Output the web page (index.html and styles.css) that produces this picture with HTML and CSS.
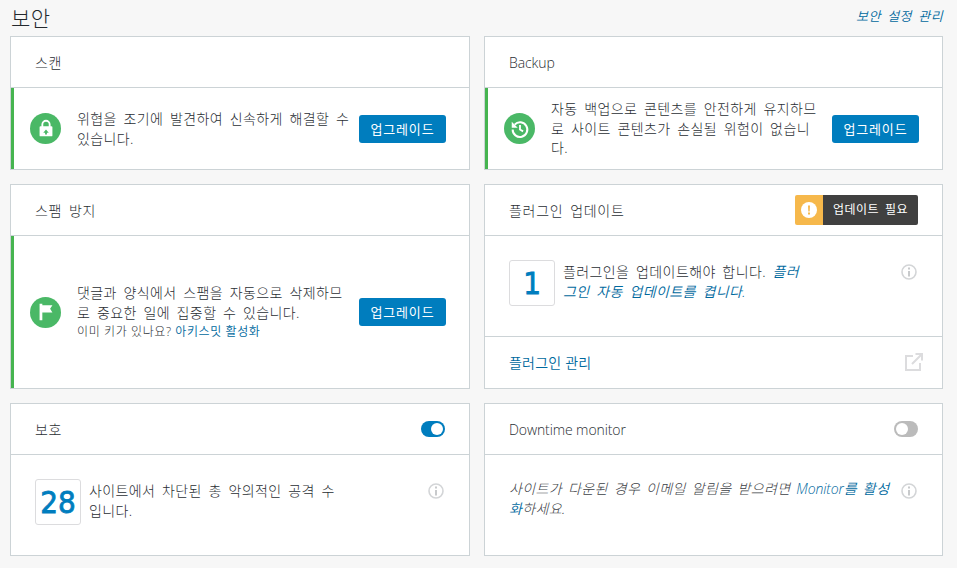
FILE: index.html
```html
<!DOCTYPE html>
<html lang="ko">
<head>
<meta charset="utf-8">
<title>보안</title>
<link rel="stylesheet" href="styles.css">
</head>
<body>
<header class="page-head">
  <h1 class="page-title">보안</h1>
  <a class="settings-link" href="#">보안 설정 관리</a>
</header>
<main class="grid">
  <section class="card">
    <div class="card-head"><h2>스캔</h2></div>
    <div class="upsell">
      <span class="round-icon"><svg viewBox="0 0 24 24" width="22" height="22"><path fill="#fff" d="M18 9h-1V7a5 5 0 0 0-10 0v2H6a1 1 0 0 0-1 1v9a1 1 0 0 0 1 1h12a1 1 0 0 0 1-1v-9a1 1 0 0 0-1-1zM9 7a3 3 0 0 1 6 0v2H9zm3 5.5 3 3.5h-2v2h-2v-2H9z"/></svg></span>
      <p class="upsell-text">위협을 조기에 발견하여 신속하게 해결할 수 있습니다.</p>
      <a class="btn" href="#">업그레이드</a>
    </div>
  </section>
  <section class="card">
    <div class="card-head"><h2 class="latin">Backup</h2></div>
    <div class="upsell">
      <span class="round-icon"><svg viewBox="0 0 24 24" width="22" height="22"><path fill="none" stroke="#fff" stroke-width="2.2" d="M6.200 7.200A8 8 0 1 1 4 12.500"/><path fill="#fff" d="M3 4v6.500h6.500z"/><path fill="none" stroke="#fff" stroke-width="2" d="M12 7.500V12.600l3.400 2"/></svg></span>
      <p class="upsell-text">자동 백업으로 콘텐츠를 안전하게 유지하므로 사이트 콘텐츠가 손실될 위험이 없습니다.</p>
      <a class="btn" href="#">업그레이드</a>
    </div>
  </section>
  <section class="card">
    <div class="card-head"><h2>스팸 방지</h2></div>
    <div class="upsell">
      <span class="round-icon"><svg viewBox="0 0 24 24" width="22" height="22"><path fill="#fff" d="M5 3h3v1.500h11l-2.500 4 2.500 4H8V21H5z"/></svg></span>
      <div class="upsell-text">
        <p>댓글과 양식에서 스팸을 자동으로 삭제하므로 중요한 일에 집중할 수 있습니다.</p>
        <p class="upsell-note">이미 키가 있나요? <a href="#">아키스밋 활성화</a></p>
      </div>
      <a class="btn" href="#">업그레이드</a>
    </div>
  </section>
  <section class="card">
    <div class="card-head">
      <h2>플러그인 업데이트</h2>
      <span class="badge">
        <span class="badge-icon"><svg viewBox="0 0 16 16" width="16" height="16"><circle cx="8" cy="8" r="8" fill="#fff"/><path fill="#f6b84b" d="M7 3.500h2L8.700 9.500H7.300zM7 10.500h2v2H7z"/></svg></span>
        <span class="badge-text">업데이트 필요</span>
      </span>
    </div>
    <div class="stat">
      <span class="stat-num">1</span>
      <p class="stat-text">플러그인을 업데이트해야 합니다. <a class="em" href="#">플러그인 자동 업데이트를 켭니다.</a></p>
      <svg class="info" viewBox="0 0 16 16" width="16" height="16"><circle cx="8" cy="8" r="7" fill="none" stroke="#d3d5d7" stroke-width="1.600"/><path fill="#c8cacc" d="M7 3.500h2v2H7zM7 7h2v5.500H7z"/></svg>
    </div>
    <div class="card-foot">
      <a href="#">플러그인 관리</a>
      <svg viewBox="0 0 20 20" width="20" height="20"><path fill="none" stroke="#dcdcde" stroke-width="2" d="M9 4H2v14h14v-7M8 12 18 2M11.500 2H18v6.500"/></svg>
    </div>
  </section>
  <section class="card">
    <div class="card-head">
      <h2>보호</h2>
      <span class="toggle on"></span>
    </div>
    <div class="stat">
      <span class="stat-num">28</span>
      <p class="stat-text">사이트에서 차단된 총 악의적인 공격 수입니다.</p>
      <svg class="info" viewBox="0 0 16 16" width="16" height="16"><circle cx="8" cy="8" r="7" fill="none" stroke="#d3d5d7" stroke-width="1.600"/><path fill="#c8cacc" d="M7 3.500h2v2H7zM7 7h2v5.500H7z"/></svg>
    </div>
  </section>
  <section class="card">
    <div class="card-head">
      <h2 class="latin">Downtime monitor</h2>
      <span class="toggle"></span>
    </div>
    <div class="stat">
      <p class="stat-wide">사이트가 다운된 경우 이메일 알림을 받으려면 <a href="#"><span class="latin">Monitor</span>를 활성화</a>하세요.</p>
      <svg class="info" viewBox="0 0 16 16" width="16" height="16"><circle cx="8" cy="8" r="7" fill="none" stroke="#d3d5d7" stroke-width="1.600"/><path fill="#c8cacc" d="M7 3.500h2v2H7zM7 7h2v5.500H7z"/></svg>
    </div>
  </section>
</main>
</body>
</html>
```
FILE: styles.css
```css
* { box-sizing: border-box; }
html, body { margin: 0; }
body {
  background: #f7f7f7;
  color: #2a2e33;
  font-family: "Open Sans", "Noto Sans CJK KR", sans-serif;
  font-size: 14px;
  font-weight: 300;
  letter-spacing: 0.4px;
  word-spacing: 2.6px;
  padding: 0 14px 0 10px;
  height: 568px;
  overflow: hidden;
}
a { color: #00699e; text-decoration: none; font-weight: 350; }
p { margin: 0; }
.page-head {
  display: flex;
  justify-content: space-between;
  height: 36px;
}
.page-title {
  margin: 4px 0 0 1px;
  font-size: 21px;
  line-height: 28px;
  font-weight: 300;
  color: #23282d;
}
.settings-link {
  margin-top: 7px;
  font-size: 13px;
  line-height: 18px;
  font-style: italic;
}
.grid {
  display: grid;
  grid-template-columns: 460px 459px;
  gap: 14px;
}
.card {
  background: #fff;
  border: 1px solid #ccd3d6;
  display: flex;
  flex-direction: column;
}
.card-head {
  height: 51px;
  flex: none;
  padding: 0 24px;
  border-bottom: 1px solid #ccd3d6;
  display: flex;
  align-items: center;
  justify-content: space-between;
}
.card-head h2 {
  margin: 0;
  font-size: 14px;
  font-weight: 300;
  letter-spacing: 0.7px;
  word-spacing: 2.5px;
  color: #2a2e33;
}
.card-head h2.latin,
.latin {
  letter-spacing: -0.1px;
  word-spacing: 0;
}
.upsell {
  flex: 1;
  min-height: 81px;
  display: flex;
  align-items: center;
  border-left: 3px solid #46b450;
  padding: 11px 23px 11px 16px;
}
.round-icon {
  flex: none;
  width: 31px;
  height: 31px;
  border-radius: 50%;
  background: #4ab866;
  display: flex;
  align-items: center;
  justify-content: center;
}
.upsell-text {
  flex: 1;
  margin: 0 8px 0 16px;
  line-height: 19.400px;
}
.upsell-note { font-size: 12px; line-height: 19px; word-spacing: 0; letter-spacing: 0.6px; }
.btn {
  flex: none;
  width: 87px;
  height: 28px;
  border-radius: 3px;
  background: #007dbe;
  color: #fff;
  font-size: 13px;
  font-weight: 400;
  letter-spacing: 0.8px;
  line-height: 29px;
  text-align: center;
}
.badge {
  display: flex;
  height: 30px;
  border-radius: 2px;
  overflow: hidden;
  font-size: 12px;
  line-height: 30px;
}
.badge-icon {
  width: 28px;
  background: #f6b84b;
  display: flex;
  align-items: center;
  justify-content: center;
}
.badge-text {
  width: 95px;
  background: #404040;
  color: #fff;
  text-align: center;
  font-weight: 400;
}
.stat {
  flex: 1;
  display: flex;
  align-items: flex-start;
  padding: 24px 24px 30px;
}
.stat-num {
  flex: none;
  width: 46px;
  height: 46px;
  border: 1px solid #dcdcde;
  border-radius: 3px;
  color: #007dbe;
  font-family: "DejaVu Sans Condensed", sans-serif;
  font-weight: 400;
  letter-spacing: 0;
  -webkit-text-stroke: 0.8px #007dbe;
  font-size: 31px;
  line-height: 44px;
  text-align: center;
}
.stat-text {
  width: 249px;
  margin: 2px 0 0 8px;
  line-height: 20px;
}
.stat-text .em { font-style: italic; }
.stat-wide {
  flex: 1;
  line-height: 20px;
  font-style: italic;
  color: #3c4146;
  word-spacing: 1.8px;
}
.info { flex: none; margin: 4px 1px 0 auto; }
.stat-wide + .info { margin: 4px 1px 0 4px; }
.card-foot {
  height: 52px;
  flex: none;
  padding: 0 18px 2px 24px;
  border-top: 1px solid #ccd3d6;
  display: flex;
  align-items: center;
  justify-content: space-between;
  letter-spacing: 0.2px;
  word-spacing: 0;
}
.toggle {
  width: 24px;
  height: 16px;
  border-radius: 8px;
  background: #bbb;
  position: relative;
}
.toggle::after {
  content: "";
  position: absolute;
  top: 2px;
  left: 2px;
  width: 12px;
  height: 12px;
  border-radius: 50%;
  background: #fff;
}
.toggle.on { background: #007dbe; }
.toggle.on::after { left: 10px; }
```
